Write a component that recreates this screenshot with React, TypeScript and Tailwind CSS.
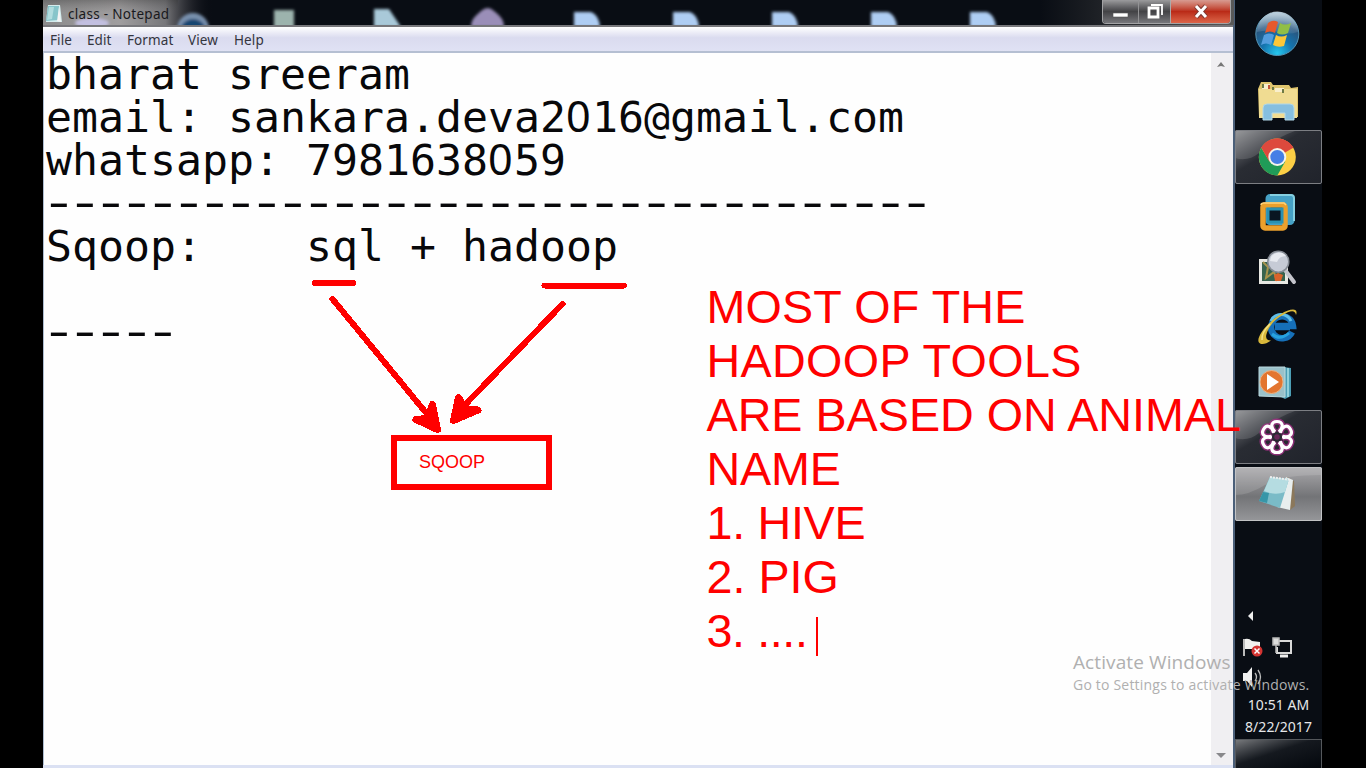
import type { ReactNode } from "react";

const menuItems = [
  { label: "File", cls: "w-[37px]" },
  { label: "Edit", cls: "w-[40px]" },
  { label: "Format", cls: "w-[61px]" },
  { label: "View", cls: "w-[46px]" },
  { label: "Help", cls: "w-[40px]" },
];

function Zero() {
  return <span className="font-['Noto_Sans'] leading-[0px] tracking-[1.3px]">0</span>;
}

function Dashes({ count }: { count: number }) {
  return (
    <div className="-mt-px mb-px -ml-[5.9px] h-[43px] w-fit origin-left scale-x-[1.45] tracking-[-8.077px]">
      {"-".repeat(count)}
    </div>
  );
}

function TitleBar() {
  return (
    <div className="relative flex h-[27px] shrink-0 items-start border-b-2 border-[#77777b] bg-[#090d14]">
      <svg className="absolute top-0 left-0" width="1191" height="25" viewBox="43 0 1191 25">
        <defs>
          <linearGradient id="glow" x1="0" x2="1">
            <stop offset="0" stopColor="#8b8b8b" />
            <stop offset=".45" stopColor="#a09e9f" />
            <stop offset=".72" stopColor="#77777a" />
            <stop offset="1" stopColor="#0c0c14" stopOpacity="0" />
          </linearGradient>
          <linearGradient id="fade" x1="0" x2="0" y1="0" y2="1">
            <stop offset="0" stopColor="#333" stopOpacity=".35" />
            <stop offset=".5" stopColor="#555" stopOpacity="0" />
          </linearGradient>
          <linearGradient id="rightGlow" x1="0" x2="1">
            <stop offset="0" stopColor="#4a4a4a" stopOpacity="0" />
            <stop offset="1" stopColor="#5a5a5a" />
          </linearGradient>
          <filter id="soft" x="-20%" y="-40%" width="140%" height="180%">
            <feGaussianBlur stdDeviation="1.8" />
          </filter>
        </defs>
        <rect x="43" width="170" height="25" fill="url(#glow)" />
        <rect x="43" width="135" height="25" fill="url(#fade)" />
        <rect x="1040" width="195" height="25" fill="url(#rightGlow)" />
        <g filter="url(#soft)">
          <ellipse cx="92" cy="23" rx="17" ry="5" fill="#c2bfe0" />
          <circle cx="193" cy="29" r="16" fill="#7890ad" />
          <circle cx="193" cy="32" r="13" fill="#19446f" />
          <path d="M274 10h20v18h-20z" fill="#9cb3ad" />
          <path d="M374 9h15l12 18h-27z" fill="#a9c9d9" />
          <path d="M471 27c0-9 6-12 10-16q7-6 13 0c6 5 10 8 10 16z" fill="#9a8eb8" />
          {[574, 673, 772, 871, 970].map((x) => (
            <path key={x} d={`M${x} 12h17q8 3 9 15h-26z`} fill="#aecdf3" />
          ))}
        </g>
      </svg>
      <svg className="relative mt-[4px] ml-px" width="19" height="20" viewBox="0 0 19 20">
        <path d="M4 1h12l2 17H2z" fill="#d4eced" />
        <path d="M4 2h11l-1 14-12 1z" fill="#87c5ca" />
        <path d="M5 3h5L8 15l-5 1z" fill="#b2dddf" />
        <path d="m15 3 2 15-4-1z" fill="#f3f4f4" />
      </svg>
      <span className="relative mt-[5px] ml-[5px] font-['Noto_Sans',sans-serif] text-[13.5px] leading-[18px] tracking-[0.3px] text-[#19191d]">class - Notepad</span>
      <div className="relative mr-[2px] ml-auto flex h-[24px] w-[129px] overflow-hidden rounded-b-[4px] border border-t-0 border-[#a3a3a5]">
        <div className="flex w-[36px] items-center justify-center border-r border-[#929294] bg-linear-to-b from-[#9b9b9d] via-[#434346] via-50% to-[#77777b]">
          <svg width="18" height="20" viewBox="0 0 18 20"><path d="M1 11h15v4H1z" fill="#fff" stroke="#555" strokeWidth=".6" /></svg>
        </div>
        <div className="flex w-[32px] items-center justify-center border-r border-[#aaa] bg-linear-to-b from-[#9b9b9d] via-[#434346] via-50% to-[#77777b]">
          <svg width="20" height="20" viewBox="0 0 20 20" fill="none" stroke="#fff">
            <path d="M6 3h11v10" strokeWidth="1.8" />
            <path d="M4 6h9v9H4z" strokeWidth="2.8" />
          </svg>
        </div>
        <div className="flex flex-1 items-center justify-center bg-linear-to-b from-[#d79b91] via-[#ba2a17] via-50% to-[#dc6448]">
          <svg width="18" height="20" viewBox="0 0 18 20"><path d="m4 4 10 11M14 4 4 15" stroke="#813a32" strokeWidth="5" /><path d="m4 4 10 11M14 4 4 15" stroke="#fff" strokeWidth="3" /></svg>
        </div>
      </div>
    </div>
  );
}

function Notepad() {
  return (
    <section className="flex w-[1192px] shrink-0 flex-col border-r-2 border-[#4b5f79] bg-[#fefefe]">
      <TitleBar />
      <nav className="flex h-[26px] shrink-0 items-center border-b-2 border-[#b5bfd2] bg-linear-to-b from-white via-[#dadbef] via-45% to-[#e0e2f4] pt-[2px] pl-[7px] font-['Noto_Sans',sans-serif] text-[13.5px] tracking-[0.1px] text-[#34353e]">
        {menuItems.map((m) => (
          <span key={m.label} className={m.cls}>{m.label}</span>
        ))}
      </nav>
      <div className="flex min-h-0 flex-1 border-l border-[#aebdd0]">
        <main className="flex-1 pl-[2px] font-['DejaVu_Sans_Mono',monospace] text-[43.2px] leading-[43px] whitespace-pre text-[#08080a]">
          <div>bharat sreeram</div>
          <div className="h-[43px]">email: sankara.deva2<Zero />16@gmail.com</div>
          <div className="h-[43px]">whatsapp: 7981638<Zero />59</div>
          <Dashes count={34} />
          <div>Sqoop:    sql + hadoop</div>
          <div className="h-[43px]" />
          <Dashes count={5} />
        </main>
        <div className="flex w-[22px] flex-col items-center justify-between bg-[#f0eff2] pt-[8px] pr-[2px] pb-[6px]">
          <svg width="10" height="7" viewBox="0 0 10 7"><path d="M1 6 5 1l4 5-4-1z" fill="#777" /></svg>
          <svg width="10" height="7" viewBox="0 0 10 7"><path d="M0 1h10L5 6z" fill="#88888b" /></svg>
        </div>
      </div>
      <div className="h-[3px] shrink-0 bg-[#dbe1f3]" />
    </section>
  );
}

function Slot({ children, tone }: { children: ReactNode; tone?: "dark" | "light" }) {
  const style =
    tone === "dark"
      ? "bg-linear-to-br from-[#8c8d90] via-[#292c33] via-40% to-[#20232b] outline outline-[#7c7e83] -outline-offset-1 rounded-[2px]"
      : tone === "light"
        ? "bg-linear-to-b from-[#aaa9ac] via-[#737477] via-55% to-[#96979a] outline outline-[#c2c3c5] -outline-offset-1 rounded-[2px]"
        : "";
  return (
    <div className={`mb-[2px] h-[54px] w-[87px] shrink-0 ${style}`}>
      <svg width="86" height="54" viewBox="0 0 86 54">{children}</svg>
    </div>
  );
}

function Taskbar() {
  return (
    <aside className="flex w-[87px] shrink-0 flex-col bg-[#090d14]">
      <svg className="shrink-0" width="86" height="74" viewBox="0 0 86 74">
        <defs>
          <radialGradient id="orb" cx=".5" cy=".95" r=".9">
            <stop offset="0" stopColor="#25c8ef" />
            <stop offset=".4" stopColor="#1474af" />
            <stop offset=".75" stopColor="#29567f" />
            <stop offset="1" stopColor="#6f94ae" />
          </radialGradient>
          <linearGradient id="shine" x1="0" x2="0" y1="0" y2="1">
            <stop offset="0" stopColor="#e0e9f0" stopOpacity=".75" />
            <stop offset="1" stopColor="#a4bed0" stopOpacity=".15" />
          </linearGradient>
        </defs>
        <circle cx="42.3" cy="34" r="21.5" fill="url(#orb)" stroke="#5595b6" />
        <path d="M22 32a20.5 20.5 0 0 1 41 0q-10 3-20 0t-21 0" fill="url(#shine)" />
        <path d="M33 23q5-4 10-1l-3 11q-5-3-10 0z" fill="#e6592c" />
        <path d="M45 23q5 3 11 0l-3 10q-6 3-11 0z" fill="#91bf45" />
        <path d="M29 35q5-3 10 0l-3 10q-5-3-10 0z" fill="#539dde" />
        <path d="M41 35q5 3 11 0l-3 11q-6 2-11-1z" fill="#fbc738" />
      </svg>
      <Slot>
        <path d="M23 15 26 8h10l2 3h16l2 3 7-1v30H24z" fill="#dfc56e" />
        <path d="M24 15h38v29H24z" fill="#f0dc92" />
        <path d="M27 10h8v5h-8zm13 4h9v4h-9z" fill="#f9efcd" />
        <path d="M28 10v4m10-1v3m10-1v4" stroke="#6e7a45" strokeWidth="2" />
        <path d="M34 11v4" stroke="#c45738" strokeWidth="2" />
        <path d="M28 46V34q0-4 4-4h23q4 0 4 4v12h-9v-7H37v7z" fill="#86bfe0" stroke="#b1d8e8" />
      </Slot>
      <Slot tone="dark">
        <path d="M0 1h60Q38 9 24 23 13 32 0 28z" fill="#fff" opacity=".13" />
        <circle cx="42.3" cy="27" r="18.5" fill="#fccf45" />
        <path d="M42.3 27 26.3 17.8a18.5 18.5 0 0 1 32 0z" fill="#dd493d" />
        <path d="M34.5 31.5 26.3 17.8A18.5 18.5 0 0 0 42.3 45.5l8-14z" fill="#209b58" />
        <path d="M26.3 17.8A18.5 18.5 0 0 1 58.3 17.8H42.3l-8 13.7z" fill="#dd493d" />
        <circle cx="42.3" cy="27" r="9" fill="#f5f4ec" />
        <circle cx="42.3" cy="27" r="7" fill="#467fe6" />
      </Slot>
      <Slot>
        <rect x="33" y="10.5" width="24" height="26" rx="2" fill="none" stroke="#46a1c5" strokeWidth="5" />
        <path d="M35 9h21q3 0 3 3v23" fill="none" stroke="#85cfe0" strokeWidth="2" />
        <path d="M50 12h6v24h-6zM34 12h18v5H34z" fill="#46a1c5" />
        <rect x="28" y="19" width="22" height="23" rx="2" fill="none" stroke="#eba02c" strokeWidth="5.5" />
        <path d="M26 19q0-2 3-2h20l2 2" fill="none" stroke="#ffd27a" strokeWidth="1.5" />
        <rect x="33" y="23" width="14" height="13" fill="#091622" stroke="#2a91b1" strokeWidth="3" />
      </Slot>
      <Slot>
        <path d="M24 17h29v25H24z" fill="#e8e8e3" />
        <path d="M27 20h23v19H27z" fill="#38634e" />
        <path d="m28 20 5 5-2 11 8-6 3 9" stroke="#a8944d" strokeWidth="2" fill="none" />
        <path d="m39 33 4-2 5 2-2 6h-6z" fill="#d9632b" />
        <path d="m50 28 9 12" stroke="#c4c5cc" strokeWidth="4" strokeLinecap="round" />
        <circle cx="43.3" cy="19.7" r="10.5" fill="#c6cbd6" stroke="#858b94" strokeWidth="1.5" />
        <path d="M35 19a9 9 0 0 1 16-5q-7 0-9 6z" fill="#e7eaf0" />
      </Slot>
      <Slot>
        <path d="M55 29H40m17 5a11 11 0 1 1 1-6H40" fill="none" stroke="#1670b9" strokeWidth="6.5" />
        <path d="M36 23a11 11 0 0 1 20 0" fill="none" stroke="#60bfea" strokeWidth="3" />
        <path d="M37 36q8 7 17-1" fill="none" stroke="#27a2df" strokeWidth="3" />
        <path d="M61 17c3-8-7-6-15-1C30 26 19 42 25 45.5q4 2 11-3-7 0-4-8c3-8 9-14 15-17 8-5 13-6 14-.5z" fill="#d9b83b" />
        <path d="M27 42q-1-7 8-16" fill="none" stroke="#f5e385" strokeWidth="1.5" />
      </Slot>
      <Slot>
        <path d="m48 13 8 1v28l-6 3-6-3z" fill="#4c9eb5" />
        <path d="M53 14v29" stroke="#a9e0e8" strokeWidth="1.5" />
        <path d="M24 13h26v30l-26-1z" fill="#9ac1ca" stroke="#bad9df" />
        <circle cx="36.5" cy="28" r="11.5" fill="#e3752f" stroke="#e9b488" />
        <path d="m32 20 12 8-12 8z" fill="#fff" />
      </Slot>
      <Slot tone="dark">
        <path d="M0 1h60Q38 9 24 23 13 32 0 28z" fill="#fff" opacity=".13" />
        {["#a52f87", "#ffffff"].map((color, layer) => (
          <g key={color} fill="none" stroke={color} strokeWidth={layer === 0 ? 6 : 3.2} opacity={layer === 0 ? 0.8 : 1}>
            {[0, 60, 120, 180, 240, 300].map((a) => (
              <path key={a} d="M40 22C35 17 36 11.5 42 11.5S49 17 44 22" transform={`rotate(${a} 42 27)`} />
            ))}
          </g>
        ))}
        <circle cx="42" cy="27" r="2.8" fill="#672758" />
      </Slot>
      <div className="mt-px shrink-0">
        <Slot tone="light">
          <path d="M0 28q14 0 30-10T86 8V1H0z" fill="#fff" opacity=".13" />
          <path d="m52 10 7 4 1 25-5 4z" fill="#8b785b" />
          <path d="m51 10 7 3-3 30-13-3z" fill="#e8eeee" />
          <path d="m35 10 19 2-9 29-21-7z" fill="#7abbc7" />
          <path d="m35 10 19 2-4 13q-10 4-21-1z" fill="#b5dce1" />
          <path d="m24 34 4-9 6 1-2 10z" fill="#3796a8" />
          <path d="m35 10 21 3" stroke="#eee" strokeWidth="2" strokeDasharray="2 1" />
        </Slot>
      </div>
      <svg className="mt-auto shrink-0" width="86" height="88" viewBox="0 606 86 88" fill="none">
        <path d="m18 611-5 5 5 5z" fill="#eee" />
        <path d="M9 639v17" stroke="#bbb" strokeWidth="2" />
        <path d="M10 639q4-1 7 2l8 1v9q-6 1-8-2h-7z" fill="#f1f1ef" />
        <circle cx="22" cy="651" r="5.5" fill="#d43432" />
        <path d="m19.5 648.5 5 5m0-5-5 5" stroke="#fff" strokeWidth="1.5" />
        <path d="M43 641h13v12H42v-6" stroke="#d9d9d9" strokeWidth="2" />
        <path d="M45 656h8" stroke="#eee" strokeWidth="3" />
        <path d="M38 638h6v7h-6zm3 7v8" fill="#ddd" stroke="#b9b9b9" strokeWidth="1.5" />
        <path d="M8 673h4l5-6v20l-5-6H8z" fill="#f0f0f0" />
        <path d="M20 673q3 4 0 8m3-11q5 7 0 14" stroke="#bbb" strokeWidth="1.3" />
      </svg>
      <div className="mb-px flex h-[44px] shrink-0 flex-col items-center font-['Noto_Sans',sans-serif] text-[14px] leading-[22px] tracking-[0.05px] whitespace-nowrap text-[#e5e6e8]">
        <span>10:51 AM</span>
        <span>8/22/2017</span>
      </div>
      <div className="h-[29px] shrink-0 border border-b-0 border-[#55585c] bg-linear-to-br from-[#77797c] via-[#15191f] via-45% to-[#05080d]" />
    </aside>
  );
}

function Annotations() {
  return (
    <div className="pointer-events-none absolute inset-0 font-['Liberation_Sans',sans-serif] text-[#ff0000]">
      <svg className="absolute inset-0" width="1366" height="768" viewBox="0 0 1366 768" fill="none" stroke="#ff0000" strokeWidth="6" strokeLinecap="round" shapeRendering="crispEdges">
        <path d="M314.500 283h38.500M544.500 285.500h79.500M332.500 299 427 414M562.500 304 462 408" />
        <path d="m432.500 404.500 5 25-21.500-10 11-1zM458.500 397.500l-5 23 24.500-10.500-13-1z" fill="#ff0000" strokeWidth="7" strokeLinejoin="round" />
      </svg>
      <div className="absolute top-[435px] left-[391px] flex h-[55px] w-[161px] items-center border-[6px] border-[#ff0000] pb-[2px] pl-[22px] text-[18px] leading-none">
        SQOOP
      </div>
      <div className="absolute top-[280px] left-[706.5px] text-[46.7px] leading-[54px] whitespace-pre">
        <div className="tracking-[0.15px]">MOST OF THE</div>
        <div className="tracking-[0.35px]">HADOOP TOOLS</div>
        <div>ARE BASED ON ANIMAL</div>
        <div className="tracking-[-0.2px]">NAME</div>
        <div className="tracking-[-0.3px]">1. HIVE</div>
        <div>2. PIG</div>
        <div className="flex items-center tracking-[-0.4px]">3. ....<span className="mt-[10px] ml-[8px] h-[39px] w-[2px] bg-[#ff0000]" /></div>
      </div>
    </div>
  );
}

export default function App() {
  return (
    <div className="relative flex h-[768px] w-[1366px] overflow-hidden bg-black pl-[43px]">
      <Notepad />
      <Taskbar />
      <Annotations />
      <div className="pointer-events-none absolute top-[650px] left-[1073px] font-['Open_Sans',sans-serif] whitespace-nowrap text-[#b0b0b0]">
        <div className="text-[19px] leading-[24px] tracking-[0.1px]">Activate Windows</div>
        <div className="text-[14px] leading-[21px] tracking-[0.2px]">Go to Settings to activate Windows.</div>
      </div>
    </div>
  );
}
